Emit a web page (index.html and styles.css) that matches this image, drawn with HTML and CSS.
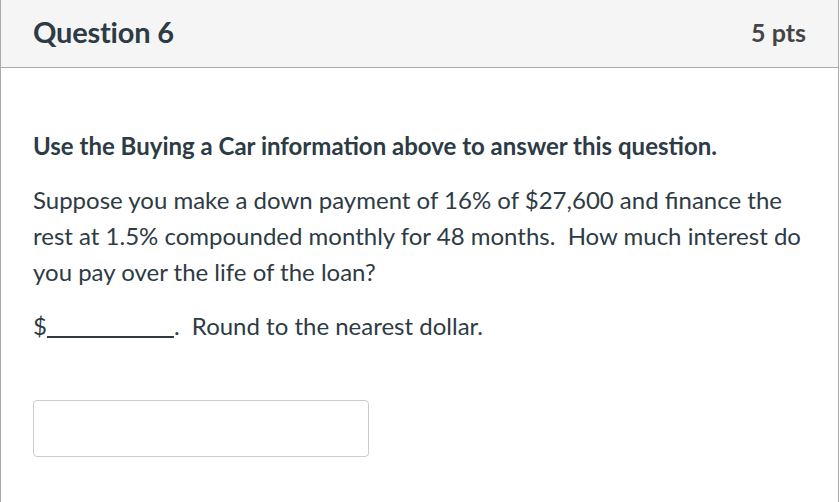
FILE: index.html
```html
<!DOCTYPE html>
<html>
<head>
<meta charset="utf-8">
<link rel="stylesheet" href="styles.css">
</head>
<body>
<div class="question">
  <div class="header">
    <h2 class="title">Question 6</h2>
    <div class="points">5 pts</div>
  </div>
  <div class="content">
    <p class="lead">Use the Buying a Car information above to answer this question.</p>
    <p>Suppose you make a down payment of 16% of $27,600 and finance the rest at 1.5% compounded monthly for 48 months.&nbsp; How much interest do you pay over the life of the loan?</p>
    <p>$<span class="blank"></span>.&nbsp; Round to the nearest dollar.</p>
    <div class="answer"><input class="answer-input" type="text"></div>
  </div>
</div>
</body>
</html>
```
FILE: styles.css
```css
html, body {
  margin: 0;
  padding: 0;
  background: #fff;
}
body {
  font-family: Lato, "Open Sans", sans-serif;
  color: #2d3b45;
}
.question {
  width: 837px;
  height: 502px;
  border-left: 1px solid #aaa;
  border-right: 1px solid #aaa;
  box-sizing: content-box;
}
.header {
  height: 68px;
  box-sizing: border-box;
  background: #f5f5f5;
  border-bottom: 1px solid #aaa;
  display: flex;
  align-items: center;
  justify-content: space-between;
  padding: 0 32px 4px 32px;
}
.title {
  margin: 0;
  font-size: 29px;
  font-weight: 700;
  letter-spacing: -0.2px;
}
.points {
  font-size: 25px;
  font-weight: 700;
  color: #444;
}
.content {
  padding: 60px 32px 0 32px;
  font-size: 24px;
  line-height: 36px;
}
.content p {
  margin: 0 0 18px 0;
}
.content .lead {
  font-weight: 700;
  margin-bottom: 18px;
}
.blank {
  display: inline-block;
  width: 127px;
  height: 1px;
  border-bottom: 2px solid #2d3b45;
  vertical-align: -3px;
}
.answer {
  padding-top: 38px;
}
.answer-input {
  display: block;
  width: 336px;
  height: 57px;
  box-sizing: border-box;
  border: 1px solid #c7cdd1;
  border-radius: 4px;
  margin: 0;
  padding: 0 12px;
  background: #fff;
  font: inherit;
  outline: none;
}
```
